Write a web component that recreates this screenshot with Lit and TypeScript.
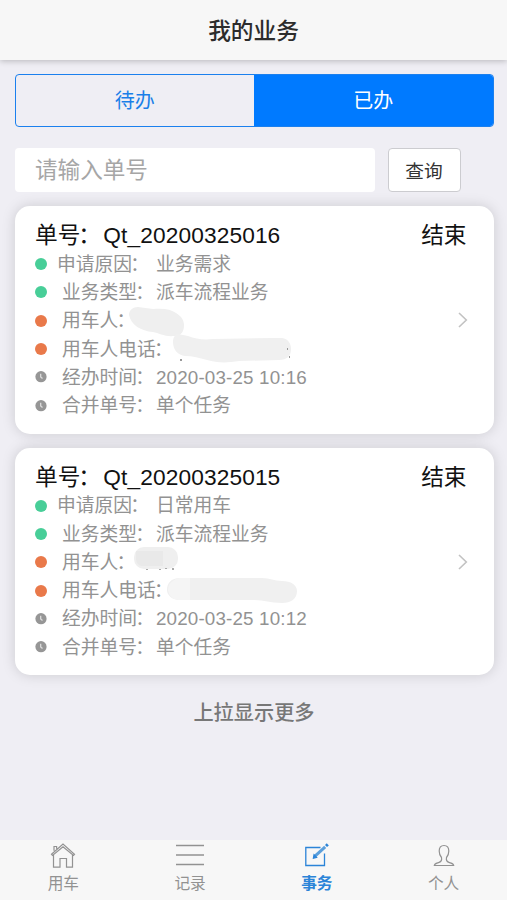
import { LitElement, html, svg, css } from "lit";
import { customElement, property } from "lit/decorators.js";

type Row = { label: string; value: string; tone: "green" | "orange" | "clock" };
type Order = { no: string; status: string; rows: Row[]; mask: unknown };

const rows = (reason: string, time: string): Row[] => [
  { label: "申请原因", value: reason, tone: "green" },
  { label: "业务类型", value: "派车流程业务", tone: "green" },
  { label: "用车人", value: "", tone: "orange" },
  { label: "用车人电话", value: "", tone: "orange" },
  { label: "经办时间", value: time, tone: "clock" },
  { label: "合并单号", value: "单个任务", tone: "clock" },
];

const orders: Order[] = [
  {
    no: "Qt_20200325016",
    status: "结束",
    rows: rows("业务需求", "2020-03-25 10:16"),
    mask: svg`
      <path d="M114 109c0-5 4-8 9-8l15 2c10-1 18 0 23 4 5 3 8 7 8 12 0 6-2 11-10 11-9 1-15-3-21-4-12-1-22-7-24-17z" fill="#efefef"/>
      <path d="M158 136c0-4 2-8 5-8l10 2c8 3 15 4 25 3l60-1h9c6 1 9 5 9 11 0 7-4 11-12 11l-40 1c-12 2-22 2-32-1-8-2-14-4-22-4-7-1-12-6-12-14z" fill="#f0f0f0"/>
      <path d="M165 153h2v2h-2zM272 142h1v2h-1zM274 150h1v2h-1z" fill="#999"/>`,
  },
  {
    no: "Qt_20200325015",
    status: "结束",
    rows: rows("日常用车", "2020-03-25 10:12"),
    mask: svg`
      <rect x="119" y="99" width="44" height="22" rx="10" fill="#efefef"/>
      <path d="M121 103h27v15h-21c-4 0-6-4-6-8z" fill="#e9e9e9"/>
      <path d="M131 121h2v1h-2zM144 121h2v1h-2zM150 120h2v1h-2zM157 120h2v2h-2z" fill="#aaa"/>
      <path d="M152 142c0-7 4-12 13-12l82 0c8 0 12 3 20 3 9 0 15 4 15 10 0 8-6 12-15 12-13 0-18-3-30-3h-72c-7 0-13-4-13-10z" fill="#f0f0f0"/>
      <path d="M175 130h-10c-7 1-12 6-12 12 1 6 5 10 11 10h11z" fill="#f5f5f5"/>`,
  },
];

@customElement("order-card")
class OrderCard extends LitElement {
  @property({ attribute: false }) order!: Order;

  static styles = css`
    :host { display: block; position: relative; height: 227.5px; box-sizing: border-box; padding: 14px 27px 0 20.5px; background: #fff; border-radius: 15px; box-shadow: 0 0 14px rgba(0, 0, 0, 0.15); }
    .head { display: flex; justify-content: space-between; height: 30px; line-height: 31px; font-size: 22.7px; color: #111; }
    .head .no { letter-spacing: 0.12px; }
    .row { display: flex; align-items: center; height: 28.3px; line-height: 28.3px; font-size: 18.8px; color: #929292; white-space: nowrap; }
    .row span { padding-top: 1.6px; }
    .mark { width: 12px; height: 12px; margin-right: 15px; flex: none; }
    .row.first .mark { margin-right: 10px; }
    .row.first .value { margin-left: 5px; }
    .colon { display: inline-block; width: 1em; text-indent: -0.1em; }
    .num { letter-spacing: 0.17px; }
    .masks { position: absolute; left: 0; top: 0; width: 479px; height: 227px; }
    .arrow { position: absolute; right: 26px; top: 106px; width: 11px; height: 16px; }
  `;

  private mark(tone: Row["tone"]) {
    if (tone === "clock")
      return html`<svg class="mark" viewBox="0 0 12 12"><circle cx="6" cy="5.7" r="5.6" fill="#969696"/><path d="M5.7 2.8v3.1l1.8 1.5" fill="none" stroke="#ddd" stroke-width="1.3"/></svg>`;
    return html`<svg class="mark" viewBox="0 0 12 12"><circle cx="6" cy="6" r="6" fill=${tone === "green" ? "#48ce98" : "#e9794a"} /></svg>`;
  }

  render() {
    const o = this.order;
    return html`
      <div class="head"><span class="no">单号<span class="colon">：</span>${o.no}</span><span>${o.status}</span></div>
      ${o.rows.map(
        (r, i) => html`<div class="row ${i === 0 ? "first" : ""}">
          ${this.mark(r.tone)}<span>${r.label}</span><span class="colon">：</span><span class="value ${i === 4 ? "num" : ""}">${r.value}</span>
        </div>`
      )}
      <svg class="masks" viewBox="0 0 479 227">${o.mask}</svg>
      <svg class="arrow" viewBox="0 0 11 16"><path d="M2 1l7.3 7L2 15" fill="none" stroke="#c2c2c2" stroke-width="1.6"/></svg>
    `;
  }
}

@customElement("app-root")
class AppRoot extends LitElement {
  static styles = css`
    :host { display: flex; flex-direction: column; height: 900px; overflow: hidden; background: #efeef4; font-family: "Liberation Sans", "Noto Sans CJK SC", sans-serif; }
    header { flex: none; height: 60px; line-height: 62px; text-align: center; font-size: 22.7px; font-weight: 500; color: #2c2c2c; background: #f7f7f7; box-shadow: 0 1px 6px rgba(0, 0, 0, 0.24); }
    main { flex: 1; padding: 14px 13.5px 0 14.5px; }
    .segment { display: flex; height: 53px; box-sizing: border-box; border: 1.5px solid #1b80ee; border-radius: 4px; overflow: hidden; }
    .segment div { flex: 1; text-align: center; font-size: 20px; line-height: 53px; color: #1a7fe8; }
    .segment .on { background: #007aff; color: #fff; }
    .search { display: flex; gap: 13px; margin-top: 21px; height: 44px; }
    .field { width: 360px; box-sizing: border-box; padding-left: 20.5px; border-radius: 4px; background: #fff; color: #a6a6a6; font-size: 22.6px; line-height: 46px; }
    .query { width: 73px; box-sizing: border-box; border: 1px solid #ccccd0; border-radius: 4px; background: #fff; color: #333; font-size: 18.7px; line-height: 45px; text-align: center; }
    .list { display: flex; flex-direction: column; gap: 14px; margin-top: 14px; }
    .more { margin-top: 23px; text-align: center; font-size: 20.2px; line-height: 31px; font-weight: 500; color: #777; }
    nav { flex: none; display: flex; height: 60px; background: #f7f7f7; }
    .tab { flex: 1; display: flex; flex-direction: column; align-items: center; color: #929292; font-size: 15.7px; line-height: 24px; }
    .tab svg { width: 32px; height: 28px; margin-top: 2px; margin-bottom: 2px; fill: none; stroke: currentColor; stroke-width: 1.2; }
    .tab.on { color: #2b84d8; font-weight: 700; }
  `;

  render() {
    return html`
      <header>我的业务</header>
      <main>
        <div class="segment"><div>待办</div><div class="on">已办</div></div>
        <div class="search"><div class="field">请输入单号</div><div class="query">查询</div></div>
        <div class="list">${orders.map((o) => html`<order-card .order=${o}></order-card>`)}</div>
        <div class="more">上拉显示更多</div>
      </main>
      <nav>
        <div class="tab">
          <svg viewBox="0 0 32 28"><path d="M4.5 12.2L16 2l11.5 10.2-1 1.2L16 4.7 5.5 13.4zM7 8.8V4.5h2.6v2.2M6.5 13v12.2H13v-8.7h6.5v8.7h6V13"/></svg>
          <span>用车</span>
        </div>
        <div class="tab">
          <svg viewBox="0 0 32 28"><path d="M2 3.5h28M2 13h28M2 22.5h28" stroke-width="1.5"/></svg>
          <span>记录</span>
        </div>
        <div class="tab on">
          <svg viewBox="0 0 32 28"><path d="M19.5 5.5H4.8v18h18.7V11.5" stroke-width="1.3"/><path d="M14 14.2L24.2 4.8" stroke-width="3" stroke="#5a9fdc"/><path d="M12.4 16.2l.6-3.4 2.6 2.7z" fill="currentColor"/><path d="M25 4l1.8-1.6" stroke-width="3"/></svg>
          <span>事务</span>
        </div>
        <div class="tab">
          <svg viewBox="0 0 32 28"><path d="M16 3.5c3.2 0 4.8 2.3 4.8 5.4 0 2.8-1 5-2.3 6.6-.5 2.5.4 4.2 2.4 4.9 2.7.9 4.6 1 4.8 3.1H6.3c.2-2.1 2.1-2.2 4.8-3.1 2-.7 2.9-2.4 2.4-4.9-1.3-1.6-2.3-3.8-2.3-6.6 0-3.1 1.6-5.4 4.8-5.4z"/></svg>
          <span>个人</span>
        </div>
      </nav>
    `;
  }
}
